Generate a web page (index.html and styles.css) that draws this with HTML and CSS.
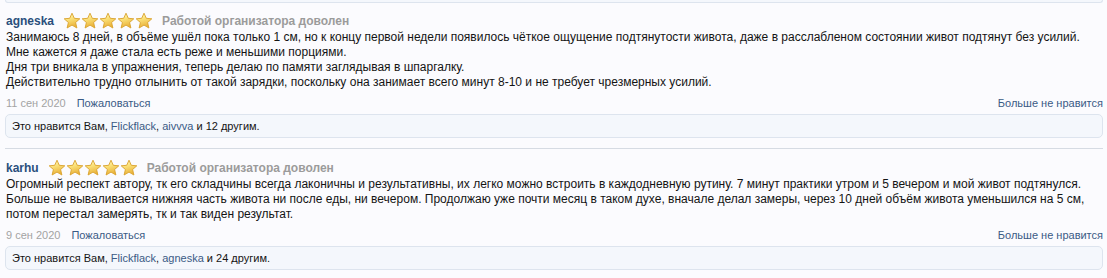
FILE: index.html
```
<!doctype html>
<html lang="ru">

<head>
	<meta charset="utf-8">
	<title>Отзывы</title>
	<link rel="stylesheet" href="styles.css">
</head>

<body>
	<svg width="0" height="0" class="defs">
		<defs>
			<linearGradient id="starFill" x1="0" y1="0" x2="0.3" y2="1">
				<stop offset="0" stop-color="#fffbd0" />
				<stop offset="0.45" stop-color="#fbe27a" />
				<stop offset="1" stop-color="#eab23a" />
			</linearGradient>
			<symbol id="star" viewBox="0 0 18 18">
				<path d="M9 1.2l2.3 5.1 5.5.5-4.2 3.7 1.3 5.5L9 13.1 4.1 16l1.3-5.5L1.2 6.8l5.5-.5z" fill="url(#starFill)" stroke="#d9a12c" stroke-width="0.9" stroke-linejoin="round" />
			</symbol>
		</defs>
	</svg>
	<div class="reviews">
		<div class="prev-tail"></div>

		<div class="review">
			<div class="review-head">
				<a class="author">agneska</a>
				<span class="stars">
					<svg><use href="#star" /></svg><svg><use href="#star" /></svg><svg><use href="#star" /></svg><svg><use href="#star" /></svg><svg><use href="#star" /></svg>
				</span>
				<span class="verdict">Работой организатора доволен</span>
			</div>
			<div class="review-text">
				Занимаюсь 8 дней, в объёме ушёл пока только 1 см, но к концу первой недели появилось чёткое ощущение подтянутости живота, даже в расслабленом состоянии живот подтянут без усилий.<br>
				Мне кажется я даже стала есть реже и меньшими порциями.<br>
				Дня три вникала в упражнения, теперь делаю по памяти заглядывая в шпаргалку.<br>
				Действительно трудно отлынить от такой зарядки, поскольку она занимает всего минут 8-10 и не требует чрезмерных усилий.
			</div>
			<div class="review-meta">
				<span class="date">11 сен 2020</span>
				<a class="report">Пожаловаться</a>
				<a class="unlike">Больше не нравится</a>
			</div>
			<div class="likes">Это нравится Вам, <a>Flickflack</a>, <a>aivvva</a> и 12 другим.</div>
		</div>

		<div class="review">
			<div class="review-head">
				<a class="author">karhu</a>
				<span class="stars">
					<svg><use href="#star" /></svg><svg><use href="#star" /></svg><svg><use href="#star" /></svg><svg><use href="#star" /></svg><svg><use href="#star" /></svg>
				</span>
				<span class="verdict">Работой организатора доволен</span>
			</div>
			<div class="review-text">
				Огромный респект автору, тк его складчины всегда лаконичны и результативны, их легко можно встроить в каждодневную рутину. 7 минут практики утром и 5 вечером и мой живот подтянулся.<br>
				Больше не вываливается нижняя часть живота ни после еды, ни вечером. Продолжаю уже почти месяц в таком духе, вначале делал замеры, через 10 дней объём живота уменьшился на 5 см,<br>
				потом перестал замерять, тк и так виден результат.
			</div>
			<div class="review-meta">
				<span class="date">9 сен 2020</span>
				<a class="report">Пожаловаться</a>
				<a class="unlike">Больше не нравится</a>
			</div>
			<div class="likes">Это нравится Вам, <a>Flickflack</a>, <a>agneska</a> и 24 другим.</div>
		</div>
	</div>
</body>

</html>
```
FILE: styles.css
```
html,
body {
	margin: 0;
	padding: 0;
	background: #fbfbfe;
	font-family: "Liberation Sans", Arial, Helvetica, sans-serif;
	font-size: 12px;
	color: #141414;
}
.defs {
	position: absolute;
}
a {
	color: #3a5a85;
	text-decoration: none;
}
.reviews {
	width: 1098px;
	margin-left: 5px;
}
.prev-tail {
	height: 2px;
	margin-bottom: -1px;
	background: #f4f7fc;
	border: 1px solid #dde4ee;
	border-top: 0;
	border-radius: 0 0 5px 5px;
}
.review {
	padding: 10px 0 10px;
	border-bottom: 1px solid #d6dbe3;
}
.review:last-child {
	border-bottom: 0;
}
.review-head {
	display: flex;
	align-items: center;
	height: 18px;
	padding-left: 1px;
	font-weight: bold;
}
.author {
	color: #2a4f7c;
}
.stars {
	display: flex;
	margin: 0 9px;
}
.stars svg {
	width: 18px;
	height: 18px;
}
.verdict {
	color: #9b9b9b;
}
.review-text {
	padding-left: 1px;
	line-height: 15px;
}
.review-meta {
	display: flex;
	margin-top: 6px;
	line-height: 15px;
	font-size: 11px;
	padding-left: 1px;
}
.date {
	color: #a3a3a3;
	margin-right: 11px;
}
.unlike {
	margin-left: auto;
	color: #3a5a85;
}
.likes {
	margin-top: 3px;
	padding: 4px 6px 3px;
	line-height: 15px;
	font-size: 11px;
	background: #f4f7fc;
	border: 1px solid #dde4ee;
	border-radius: 5px;
}
```
